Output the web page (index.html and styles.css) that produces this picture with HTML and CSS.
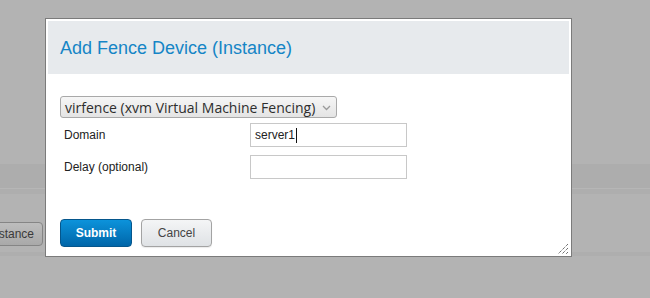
FILE: index.html
```html
<!DOCTYPE html>
<html>
<head>
<meta charset="utf-8">
<link rel="stylesheet" href="styles.css">
</head>
<body>
<div class="page">
  <div class="spacer"></div>
  <div class="band"></div>
  <div class="gap2"></div>
  <div class="line4"></div>
  <div class="btnrow">
    <div class="bgbtn">Instance</div>
  </div>
  <div class="line3"></div>
</div>

<div class="dialog">
  <div class="header"><h1 class="title">Add Fence Device (Instance)</h1></div>
  <div class="content">
    <div class="select">
      <span class="select-text">virfence (xvm Virtual Machine Fencing)</span>
      <svg class="chev" width="9" height="6" viewBox="0 0 9 6"><path d="M1 1 L4.5 4.5 L8 1" fill="none" stroke="#9a9a9a" stroke-width="1.3"/></svg>
    </div>
    <div class="row">
      <span class="label">Domain</span>
      <div class="input"><span class="val">server1</span><span class="caret"></span></div>
    </div>
    <div class="row row2">
      <span class="label">Delay (optional)</span>
      <div class="input"></div>
    </div>
    <div class="buttons">
      <div class="btn submit">Submit</div>
      <div class="btn cancel">Cancel</div>
    </div>
  </div>
  <svg class="grip" width="12" height="12" viewBox="0 0 12 12">
    <path d="M11 1 L1 11 M11 5 L5 11 M11 9 L9 11" stroke="#333" stroke-width="1" stroke-dasharray="1 1" fill="none"/>
  </svg>
</div>
</body>
</html>
```

FILE: styles.css
```css
html, body {
  margin: 0;
  padding: 0;
}
body {
  width: 650px;
  height: 298px;
  background: #b3b3b3;
  overflow: hidden;
  position: relative;
  font-family: "Liberation Sans", Arial, sans-serif;
}
.page {
  display: flex;
  flex-direction: column;
}
.spacer { height: 164px; }
.band { height: 24px; background: #adadad; }
.gap2 { height: 1px; background: #b6b6b6; }
.line4 { height: 5px; background: #aeaeae; }
.btnrow {
  height: 58px;
  display: flex;
  align-items: flex-start;
}
.bgbtn {
  margin-top: 28px;
  margin-left: -40px;
  width: 73px;
  height: 22px;
  border: 1px solid #858585;
  border-radius: 4px;
  background: linear-gradient(#bdbdbd, #a9a9a9);
  color: #3a3a3a;
  font-size: 12px;
  line-height: 22px;
  text-align: right;
  padding-right: 8px;
  box-sizing: content-box;
  white-space: nowrap;
}
.line3 { height: 4px; background: #aeaeae; }

.dialog {
  position: absolute;
  left: 45px;
  top: 18px;
  border: 1px solid #7b7b7b;
  background: #fff;
  padding: 2px;
  box-sizing: content-box;
  width: 521px;
  height: 233px;
}
.header {
  height: 53px;
  background: #e7eaed;
  display: flex;
  align-items: center;
  padding-left: 12px;
}
.title {
  margin: 0;
  font-weight: normal;
  font-size: 18px;
  color: #1585c6;
  padding-top: 2px;
}
.content {
  padding: 22px 0 0 12px;
  display: flex;
  flex-direction: column;
}
.select {
  height: 20px;
  border: 1px solid #a9a9a9;
  border-radius: 3px;
  background: linear-gradient(#f6f6f6, #e4e4e4);
  display: flex;
  align-items: center;
  justify-content: space-between;
  padding: 0 5px 0 4px;
  box-sizing: content-box;
  width: 266px;
}
.select-text {
  font-family: "Open Sans", "DejaVu Sans", sans-serif;
  font-size: 14px;
  color: #2e2e2e;
  white-space: nowrap;
}
.chev { margin-top: 1px; }
.row {
  display: flex;
  align-items: center;
  margin-top: 5px;
  height: 24px;
}
.row2 { margin-top: 8px; }
.label {
  width: 186px;
  padding-left: 4px;
  font-size: 12px;
  color: #222;
}
.input {
  border: 1px solid #c8c8c8;
  display: flex;
  align-items: center;
  padding-left: 4px;
  box-sizing: border-box;
  width: 157px;
  height: 24px;
}
.val {
  font-size: 12px;
  color: #222;
}
.caret {
  width: 1px;
  height: 15px;
  background: #111;
  margin-left: 1px;
}
.buttons {
  display: flex;
  gap: 9px;
  margin-top: 40px;
}
.btn {
  height: 28px;
  border-radius: 4px;
  box-sizing: border-box;
  display: flex;
  align-items: center;
  justify-content: center;
  font-size: 12px;
}
.submit {
  width: 72px;
  border: 1px solid #05568c;
  background: linear-gradient(#0c93db, #0066a9);
  color: #fff;
  font-weight: bold;
}
.cancel {
  width: 71px;
  border: 1px solid #a3a3a3;
  background: linear-gradient(#f4f5f6, #dfe2e5);
  color: #444;
  box-shadow: 0 1px 1px rgba(0,0,0,0.08);
}
.grip {
  position: absolute;
  right: 2px;
  bottom: 1px;
}
```
